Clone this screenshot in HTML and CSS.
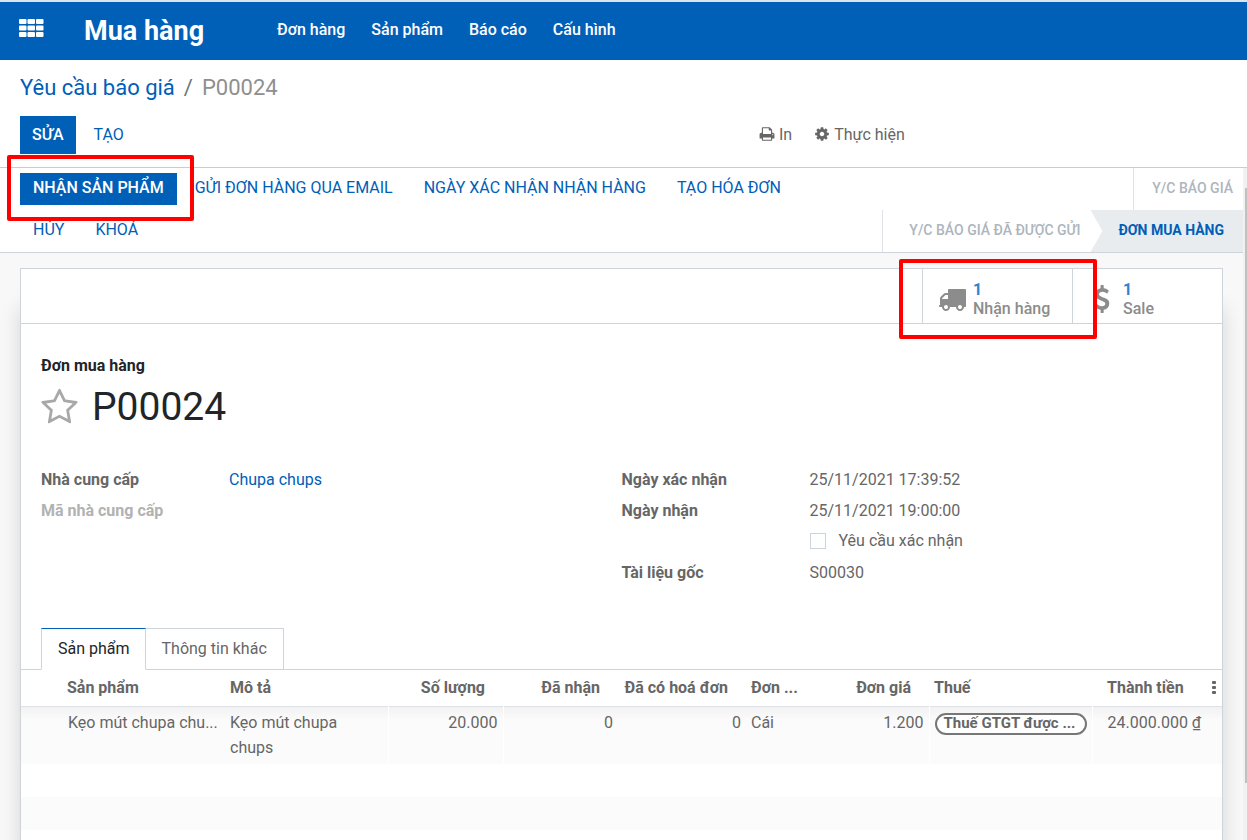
FILE: index.html
```html
<!DOCTYPE html>
<html lang="vi">
<head>
<meta charset="utf-8">
<title>P00024 - Mua hàng</title>
<meta name="viewport" content="width=device-width, initial-scale=1">
<link rel="stylesheet" href="styles.css">
</head>
<body>
<header class="navbar">
  <button class="apps" type="button" aria-label="Ứng dụng">
    <svg width="25" height="18" viewBox="0 0 25 18" fill="currentColor"><rect width="7.500" height="5" rx="1"/><rect x="8.500" width="7.500" height="5" rx="1"/><rect x="17" width="7.500" height="5" rx="1"/><rect y="6.500" width="7.500" height="5" rx="1"/><rect x="8.500" y="6.500" width="7.500" height="5" rx="1"/><rect x="17" y="6.500" width="7.500" height="5" rx="1"/><rect y="13" width="7.500" height="5" rx="1"/><rect x="8.500" y="13" width="7.500" height="5" rx="1"/><rect x="17" y="13" width="7.500" height="5" rx="1"/></svg>
  </button>
  <a class="brand" href="#">Mua hàng</a>
  <nav class="menu">
    <a href="#">Đơn hàng</a>
    <a href="#">Sản phẩm</a>
    <a href="#">Báo cáo</a>
    <a href="#">Cấu hình</a>
  </nav>
</header>

<section class="control-panel">
  <div class="breadcrumb"><a href="#">Yêu cầu báo giá</a><span class="slash">/</span><span class="current">P00024</span></div>
  <div class="control-row">
    <div class="control-main">
      <button class="btn btn-primary btn-tall" type="button">SỬA</button>
      <button class="btn btn-tall" type="button">TẠO</button>
    </div>
    <div class="control-side">
      <button class="action" type="button"><svg width="16" height="16" viewBox="0 0 1792 1792" fill="currentColor"><path d="M448 1536h896v-256h-896v256zm0-640h896v-384h-160q-40 0-68-28t-28-68v-160h-640v640zm1152 64q0-26-19-45t-45-19-45 19-19 45 19 45 45 19 45-19 19-45zm128 0v416q0 13-9.500 22.500t-22.500 9.500h-224v160q0 40-28 68t-68 28h-960q-40 0-68-28t-28-68v-160h-224q-13 0-22.500-9.500t-9.500-22.500v-416q0-79 56.500-135.500t135.500-56.500h64v-544q0-40 28-68t68-28h672q40 0 88 20t76 48l152 152q28 28 48 76t20 88v256h64q79 0 135.500 56.500t56.500 135.500z"/></svg>In</button>
      <button class="action" type="button"><svg width="16" height="16" viewBox="0 0 1792 1792" fill="currentColor"><path d="M1152 896q0-106-75-181t-181-75-181 75-75 181 75 181 181 75 181-75 75-181zm512-109v222q0 12-8 23t-20 13l-185 28q-19 54-39 91 35 50 107 138 10 12 10 25t-9 23q-27 37-99 108t-94 71q-12 0-26-9l-138-108q-44 23-91 38-16 136-29 186-7 28-36 28h-222q-14 0-24.500-8.500t-11.500-21.500l-28-184q-49-16-90-37l-141 107q-10 9-25 9-14 0-25-11-126-114-165-168-7-10-7-23 0-12 8-23 15-21 51-66.500t54-70.500q-27-50-41-99l-183-27q-13-2-21-12.500t-8-23.500v-222q0-12 8-23t19-13l186-28q14-46 39-92-40-57-107-138-10-12-10-24 0-10 9-23 26-36 98.500-107.500t94.500-71.500q13 0 26 10l138 107q44-23 91-38 16-136 29-186 7-28 36-28h222q14 0 24.500 8.500t11.500 21.500l28 184q49 16 90 37l142-107q9-9 24-9 13 0 25 10 129 119 165 170 7 8 7 22 0 12-8 23-15 21-51 66.500t-54 70.500q26 50 41 98l183 28q13 2 21 12.500t8 23.500z"/></svg>Thực hiện</button>
    </div>
  </div>
</section>

<div class="content">
  <main class="view">
    <div class="statusbar">
      <div class="status-buttons">
        <div class="marked marked-button"><button class="btn btn-primary" type="button">NHẬN SẢN PHẨM</button></div>
        <button class="btn" type="button">GỬI ĐƠN HÀNG QUA EMAIL</button>
        <button class="btn" type="button">NGÀY XÁC NHẬN NHẬN HÀNG</button>
        <button class="btn" type="button">TẠO HÓA ĐƠN</button>
        <button class="btn" type="button">HỦY</button>
        <button class="btn" type="button">KHOÁ</button>
      </div>
      <div class="stages">
        <div class="stage-row"><button class="stage" type="button">Y/C BÁO GIÁ</button></div>
        <div class="stage-row"><button class="stage stage-sent" type="button">Y/C BÁO GIÁ ĐÃ ĐƯỢC GỬI</button><button class="stage stage-active" type="button" aria-current="step">ĐƠN MUA HÀNG</button></div>
      </div>
    </div>

    <div class="backdrop">
      <article class="sheet">
        <div class="stat-bar">
          <div class="marked marked-stat">
            <button class="stat" type="button">
              <svg width="28" height="28" viewBox="0 0 1792 1792" fill="currentColor"><path d="M640 1408q0-52-38-90t-90-38-90 38-38 90 38 90 90 38 90-38 38-90zm-384-512h384v-256h-158q-13 0-22 9l-195 195q-9 9-9 22v30zm1280 512q0-52-38-90t-90-38-90 38-38 90 38 90 90 38 90-38 38-90zm256-1088v1024q0 15-4 26.500t-13.500 18.500-16.500 11.500-23.500 6-22.500 2-25.500 0-22.500-.5q0 106-75 181t-181 75-181-75-75-181h-384q0 106-75 181t-181 75-181-75-75-181h-64q-3 0-22.500.5t-25.500 0-22.500-2-23.500-6-16.500-11.500-13.500-18.500-4-26.500q0-26 19-45t45-19v-320q0-8-.5-35t0-38 2.500-34.500 6.500-37 14-30.500 22.500-30l198-198q19-19 50.500-32t58.500-13h160v-192q0-26 19-45t45-19h1024q26 0 45 19t19 45z"/></svg>
              <span class="stat-text"><span class="stat-value">1</span><span>Nhận hàng</span></span>
            </button>
          </div>
          <button class="stat" type="button">
            <svg width="28" height="28" viewBox="0 0 1792 1792" fill="currentColor"><path d="M1362 1185q0 153-99.500 263.500t-258.500 136.500v175q0 14-9 23t-23 9h-135q-13 0-22.500-9.500t-9.500-22.500v-175q-66-9-127.500-31t-101.500-44.500-74-48-46.500-37.500-17.500-18q-17-21-2-41l103-135q7-10 23-12 15-2 24 9l2 2q113 99 243 125 37 8 74 8 81 0 142.500-43t61.500-122q0-28-15-53t-33.500-42-58.500-37.500-66-32-80-32.500q-39-16-61.500-25t-61.500-26.500-62.500-31-56.500-35.500-53.500-42.500-43.500-49-35.500-58-21-66.500-8.500-78q0-138 98-242t255-134v-180q0-13 9.500-22.500t22.500-9.500h135q14 0 23 9t9 23v176q57 6 110.500 23t87 33.500 63.500 37.500 39 29 15 14q17 18 5 38l-81 146q-8 15-23 16-14 3-27-7-3-3-14.500-12t-39-26.500-58.500-32-74.500-26-85.500-11.500q-95 0-155 43t-60 111q0 26 8.500 48t29.500 41.500 39.500 33 56 31 60.500 27 70 27.500q53 20 81 31.500t76 35 75.500 42.500 62 50 53 63.500 31.500 76.500 13 94z"/></svg>
            <span class="stat-text"><span class="stat-value">1</span><span>Sale</span></span>
          </button>
        </div>

        <div class="title">
          <div class="title-kind">Đơn mua hàng</div>
          <div class="title-line">
            <button class="star" type="button" aria-label="Ưu tiên"><svg width="39" height="39" viewBox="0 0 1792 1792" fill="currentColor"><path d="M1201 1004l306-297-422-62-189-382-189 382-422 62 306 297-73 421 378-199 377 199zm527-357q0 22-26 48l-363 354 86 500q1 7 1 20 0 50-41 50-19 0-40-12l-449-236-449 236q-22 12-40 12-21 0-31.500-14.500t-10.500-35.500q0-6 2-20l86-500-364-354q-25-27-25-48 0-37 56-46l502-73 225-455q19-41 49-41t49 41l225 455 502 73q56 9 56 46z"/></svg></button>
            <h1>P00024</h1>
          </div>
        </div>

        <div class="groups">
          <div class="group">
            <span class="label">Nhà cung cấp</span><a href="#">Chupa chups</a>
            <span class="label label-empty">Mã nhà cung cấp</span><span></span>
          </div>
          <div class="group">
            <span class="label">Ngày xác nhận</span><span>25/11/2021 17:39:52</span>
            <span class="label">Ngày nhận</span><span>25/11/2021 19:00:00</span>
            <span></span><label class="check" for="confirm"><input type="checkbox" id="confirm">Yêu cầu xác nhận</label>
            <span class="label">Tài liệu gốc</span><span>S00030</span>
          </div>
        </div>

        <div class="tabs" role="tablist">
          <button class="tab tab-active" type="button" role="tab" aria-selected="true">Sản phẩm</button>
          <button class="tab" type="button" role="tab" aria-selected="false">Thông tin khác</button>
        </div>

        <table class="lines">
          <colgroup><col class="c-handle"><col class="c-wide"><col class="c-wide"><col class="c-mid"><col class="c-mid"><col class="c-billed"><col class="c-unit"><col class="c-price"><col class="c-wide"><col class="c-mid"><col class="c-more"></colgroup>
          <thead>
            <tr><th></th><th>Sản phẩm</th><th>Mô tả</th><th class="num">Số lượng</th><th class="num">Đã nhận</th><th class="num">Đã có hoá đơn</th><th>Đơn ...</th><th class="num">Đơn giá</th><th>Thuế</th><th class="total">Thành tiền</th><th class="more"><svg width="4" height="14" viewBox="0 0 4 14" fill="currentColor"><rect width="4" height="3" rx="1"/><rect y="5" width="4" height="3" rx="1"/><rect y="10" width="4" height="3" rx="1"/></svg></th></tr>
          </thead>
          <tbody>
            <tr><td></td><td class="clip">Kẹo mút chupa chu...</td><td class="split">Kẹo mút chupa chups</td><td class="num split">20.000</td><td class="num">0</td><td class="num">0</td><td>Cái</td><td class="num split">1.200</td><td class="split"><span class="tag">Thuế GTGT được ...</span></td><td class="total">24.000.000 ₫</td><td></td></tr>
            <tr class="blank"><td colspan="11"></td></tr>
            <tr class="blank"><td colspan="11"></td></tr>
            <tr class="blank"><td colspan="11"></td></tr>
          </tbody>
        </table>
      </article>
    </div>
  </main>
  <div class="scrollbar"><div class="thumb"></div></div>
</div>
</body>
</html>
```
FILE: styles.css
```css
* { box-sizing: border-box; }

body {
  margin: 0;
  height: 100vh;
  overflow: hidden;
  display: flex;
  flex-direction: column;
  font: 400 16px/25px Roboto, "Noto Sans", sans-serif;
  color: #666;
  background: #fff;
}

button {
  font: inherit;
  color: inherit;
  background: none;
  border: 0;
  padding: 0;
  cursor: pointer;
}

a { color: #005eb8; text-decoration: none; }
svg { display: block; flex: none; }

.navbar {
  flex: none;
  display: flex;
  align-items: center;
  height: 60px;
  padding: 0 19px;
  color: #fff;
  background: #0060b8;
  border-top: 2px solid #d8e6ec;
}
.apps { margin: 0 40px 6px 0; }
.brand { margin-right: 73px; font-size: 27px; font-weight: 700; color: #fff; }
.menu { display: flex; gap: 26px; padding-bottom: 4px; }
.menu a { font-weight: 500; color: #fff; }

.control-panel {
  flex: none;
  padding: 12px 20px 13px;
  border-bottom: 1px solid #ccc;
}
.breadcrumb { font-size: 22px; line-height: 32px; }
.slash { padding: 0 9px; color: #6c757d; }
.current { color: #8f8f8f; }
.control-row { display: grid; grid-template-columns: 739px 1fr; padding-top: 12px; }
.control-main { display: flex; gap: 6px; }
.control-side { display: flex; gap: 22px; align-items: center; padding-bottom: 2px; }
.action { display: flex; align-items: center; gap: 4px; }

.btn { height: 32px; padding: 0 13px 2px; line-height: 28px; color: #005eb8; white-space: nowrap; }
.btn-primary { color: #fff; font-weight: 500; background: #0060b8; }
.btn-tall { height: 38px; padding: 0 12px; line-height: 38px; }

.content { flex: 1; min-height: 0; display: flex; }
.view { flex: 1; min-width: 0; display: flex; flex-direction: column; }

.statusbar {
  flex: none;
  display: flex;
  justify-content: space-between;
  padding-left: 20px;
  border-bottom: 1px solid #ced4da;
}
.status-buttons {
  display: flex;
  flex-wrap: wrap;
  align-content: flex-start;
  gap: 10px 5px;
  width: 800px;
  padding-top: 5px;
}
.marked { position: relative; }
.marked::after {
  content: "";
  position: absolute;
  z-index: 1;
  border: 4px solid #f00;
  border-radius: 2px;
  pointer-events: none;
}
.marked-button::after { inset: -18px -17px -16px -13px; }
.marked-stat::after { inset: -10px -25px -16px -23px; }

.stages { display: flex; flex-direction: column; align-items: flex-end; }
.stage-row { display: flex; height: 42px; border-left: 1px solid #dee2e6; }
.stage { padding: 0 10px 2px 18px; font-size: 14px; font-weight: 500; color: #adb5bd; white-space: nowrap; }
.stage-sent { padding: 0 10px 2px 26px; }
.stage-active {
  padding: 0 19px 2px 28px;
  font-weight: 700;
  color: #005eb8;
  background: #e9ecef;
  clip-path: polygon(0 0, 100% 0, 100% 100%, 0 100%, 12px 50%);
}

.backdrop { flex: 1; min-height: 0; overflow: hidden; padding: 15px 20px 0; background: #f8f8f8; }
.sheet {
  min-height: 640px;
  background: #fff;
  border: 1px solid #ced4da;
  box-shadow: 0 40px 20px rgba(0, 0, 0, 0.14);
}
.stat-bar { display: flex; justify-content: flex-end; height: 55px; border-bottom: 1px solid #ced4da; }
.stat {
  display: flex;
  align-items: center;
  gap: 7px;
  width: 150px;
  height: 54px;
  padding: 5px 15px 0;
  font-weight: 500;
  line-height: 19px;
  text-align: left;
  color: #8c8c8c;
  border-left: 1px solid #ced4da;
}
.stat-text { display: flex; flex-direction: column; }
.stat-value { font-weight: 700; color: #3083cf; }

.title { padding: 29px 20px 0; }
.title-kind { font-weight: 700; color: #212529; }
.title-line { display: flex; align-items: center; gap: 13px; margin-left: -1px; padding-top: 4px; }
.star { color: #a8a8a8; }
h1 { margin: 0; font-size: 39px; font-weight: 400; line-height: 50px; color: #212529; }

.groups { display: grid; grid-template-columns: 1fr 1fr; padding: 32px 20px 0; }
.group {
  display: grid;
  grid-template-columns: 188px 1fr;
  grid-auto-rows: 31px;
  align-items: center;
  align-content: start;
}
.label { font-weight: 700; }
.label-empty { color: #b2b2b2; }
.check { display: flex; align-items: center; gap: 13px; padding-bottom: 2px; }
.check input {
  appearance: none;
  width: 16px;
  height: 16px;
  margin: 0;
  background: #fdfefe;
  border: 1px solid #ced4da;
}

.tabs { display: flex; padding: 40px 20px 0; box-shadow: inset 0 -1px #ced4da; }
.tab { height: 42px; padding: 0 16px 2px; border: 1px solid #ced4da; border-left: 0; }
.tab-active {
  padding: 0 15px 2px 16px;
  color: #212529;
  background: #fff;
  border-left: 1px solid #ced4da;
  border-top-color: #0060b8;
  border-bottom-color: #fff;
}

.lines { width: 100%; table-layout: fixed; border-collapse: collapse; }
.c-handle { width: 41px; }
.c-wide { width: 163px; }
.c-mid { width: 115px; }
.c-billed { width: 128px; }
.c-unit { width: 99px; }
.c-price { width: 84px; }
.c-more { width: 15px; }
.lines th, .lines td { padding: 0 5px; text-align: left; vertical-align: top; }
.lines th { height: 36px; padding-top: 5px; font-weight: 700; white-space: nowrap; }
.lines thead { border-bottom: 1px solid #dee2e6; }
.lines td { height: 58px; padding-top: 3px; }
.lines tbody tr:nth-child(odd) { background: #fbfbfb; }
.lines tbody tr:first-child { background: linear-gradient(#f1f1f3, #fbfbfb 14px); }
.lines .num { text-align: right; }
.lines th.num { padding-right: 18px; }
.lines th.total, .lines td.total { padding-left: 15px; padding-right: 0; white-space: nowrap; }
.lines .split { border-right: 1px solid #fff; }
.lines .clip { padding-left: 6px; white-space: nowrap; }
.lines th.more { padding: 11px 0 0 5px; }
.lines .blank td { height: 33px; padding: 0; }
.tag {
  display: block;
  height: 22px;
  margin-top: 3px;
  padding: 0 7px;
  font-size: 15px;
  font-weight: 700;
  line-height: 16px;
  white-space: nowrap;
  background: #fff;
  border: 2px solid #777;
  border-radius: 11px;
}

.scrollbar { flex: none; width: 4px; padding: 20px 0 57px 2px; background: #f1f1f1; }
.thumb { height: 100%; background: #c1c1c1; }
```
